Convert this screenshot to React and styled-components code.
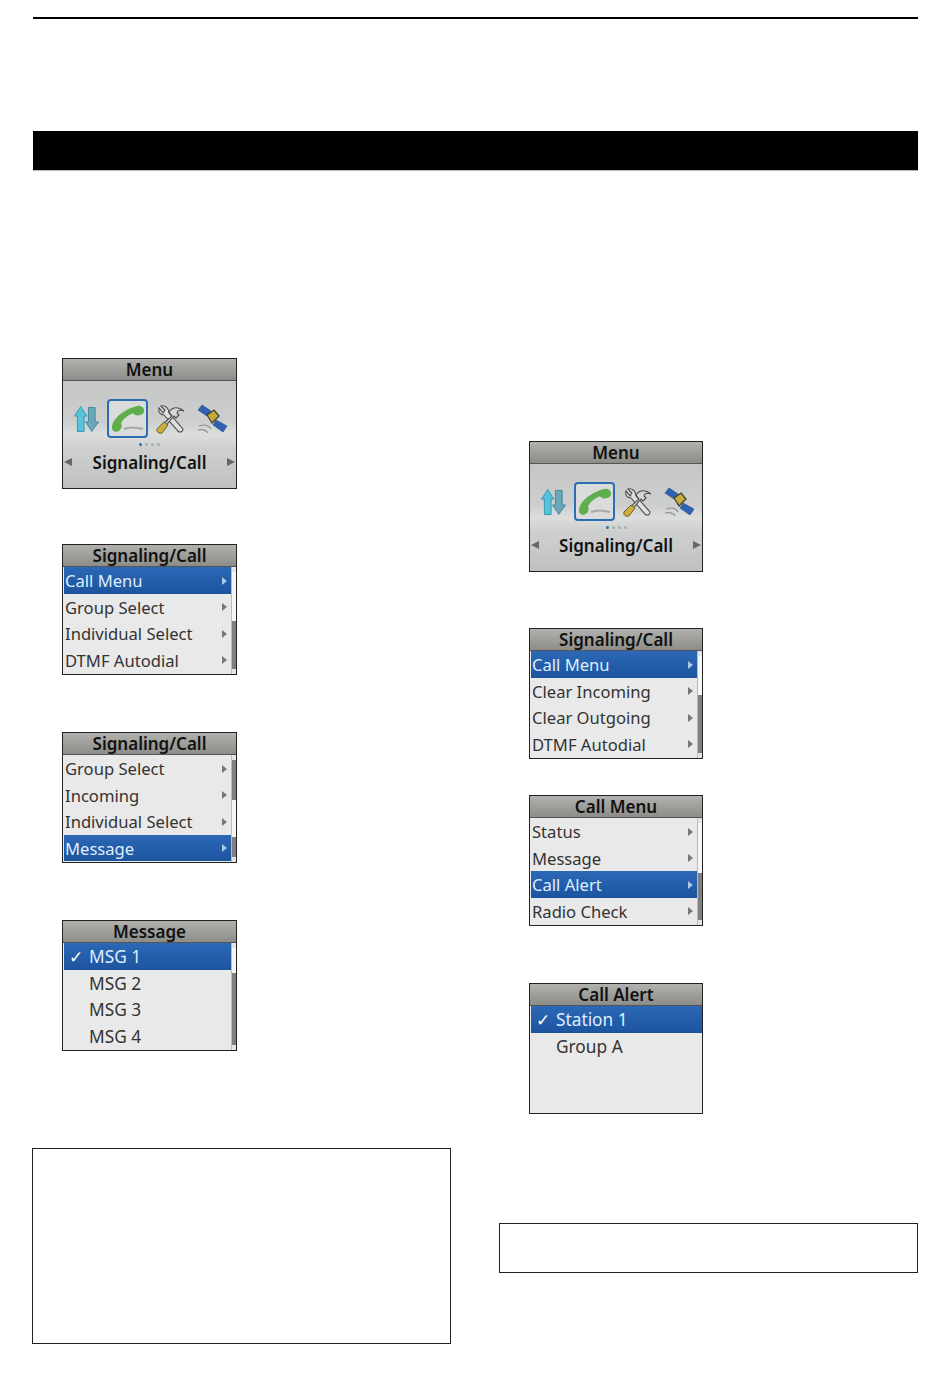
import React from 'react';
import styled, { createGlobalStyle } from 'styled-components';

const GlobalStyle = createGlobalStyle`
  html, body {
    margin: 0;
    padding: 0;
    background: #fff;
  }
  body {
    font-family: 'Noto Sans', 'Open Sans', sans-serif;
  }
`;

const Page = styled.div`
  width: 950px;
  height: 1378px;
  padding: 17px 32px 0 33px;
  box-sizing: border-box;
  overflow: hidden;
`;

const TopRule = styled.div`
  height: 2px;
  background: #000;
`;

const TitleBar = styled.div`
  height: 39px;
  margin-top: 112px;
  background: #000;
  border-bottom: 1px solid #bbb;
`;

const Columns = styled.div`
  display: grid;
  grid-template-columns: 419px 419px;
  justify-content: space-between;
`;

const Column = styled.div`
  display: flex;
  flex-direction: column;
  padding-top: ${(p) => p.$top}px;
`;

const ScreenSlot = styled.div`
  margin-left: ${(p) => p.$left}px;
  margin-bottom: ${(p) => p.$gap}px;
`;

const Screen = styled.div`
  width: ${(p) => p.$width}px;
  height: 131px;
  box-sizing: border-box;
  border: 1px solid #222;
  background: #e9e9e9;
  display: flex;
  flex-direction: column;
  overflow: hidden;
`;

const ScreenTitle = styled.div`
  height: 22px;
  flex: none;
  background: linear-gradient(#b2b1ae, #8c8c88);
  border-bottom: 1px solid #555;
  box-sizing: border-box;
  text-align: center;
  font-size: 17px;
  font-weight: 600;
  line-height: 22px;
  color: #111;
`;

const MenuBody = styled.div`
  flex: 1;
  display: flex;
  flex-direction: column;
  background: linear-gradient(#c5c6c6 0%, #cdcece 38%, #dcdddd 50%, #cfd0d0 62%, #bfc1c1 100%);
`;

const IconRow = styled.div`
  display: flex;
  align-items: center;
  height: 39px;
  margin-top: 18px;
  padding-left: 11px;
`;

const IconCell = styled.div`
  width: ${(p) => p.$width}px;
  height: 36px;
  margin-right: ${(p) => p.$gap}px;
  display: flex;
  align-items: center;
  justify-content: center;
  flex: none;
`;

const PhoneFrame = styled.div`
  width: 41px;
  height: 39px;
  box-sizing: border-box;
  border: 2px solid #2a6db5;
  border-radius: 4px;
  background: #dadcdc;
  display: flex;
  align-items: center;
  justify-content: center;
  margin-right: 8px;
  flex: none;
`;

const Dots = styled.div`
  display: flex;
  justify-content: center;
  gap: 3px;
  height: 3px;
  margin-top: 5px;
`;

const Dot = styled.span`
  width: 3px;
  height: 3px;
  border-radius: 50%;
  background: ${(p) => (p.$on ? '#2a6db5' : '#a9aeb0')};
`;

const Selector = styled.div`
  display: flex;
  align-items: center;
  justify-content: space-between;
  padding: 0 1px 0 1px;
  height: 24px;
  margin-top: 4px;
  font-size: 17px;
  font-weight: 600;
  color: #111;
`;

const Caret = styled.span`
  width: 0;
  height: 0;
  border-top: 4px solid transparent;
  border-bottom: 4px solid transparent;
  ${(p) => (p.$left ? 'border-right: 8px solid #666;' : 'border-left: 8px solid #666;')}
`;

const ListBody = styled.div`
  flex: 1;
  display: flex;
  min-height: 0;
`;

const Rows = styled.div`
  flex: 1;
  display: flex;
  flex-direction: column;
  padding-left: 1px;
  min-width: 0;
`;

const Row = styled.div`
  height: 26.5px;
  flex: none;
  display: flex;
  align-items: center;
  justify-content: space-between;
  box-sizing: border-box;
  padding: 1px 4px 0 1px;
  font-size: ${(p) => (p.$large ? 17.3 : 16.6)}px;
  color: ${(p) => (p.$active ? '#dfeefb' : '#333')};
  background: ${(p) => (p.$active ? 'linear-gradient(#2c68b6, #1c549f)' : 'transparent')};
`;

const RowLabel = styled.span`
  display: flex;
  align-items: center;
  white-space: nowrap;
`;

const Check = styled.span`
  width: 24px;
  padding-left: 4px;
  box-sizing: border-box;
  font-family: 'DejaVu Sans', sans-serif;
  font-size: 17px;
  font-weight: 700;
  color: #fff;
`;

const RowCaret = styled.span`
  width: 0;
  height: 0;
  border-top: 4px solid transparent;
  border-bottom: 4px solid transparent;
  border-left: 5px solid ${(p) => (p.$active ? '#a9c8e8' : '#777')};
`;

const ScrollBar = styled.div`
  width: 5px;
  flex: none;
  display: flex;
  flex-direction: column;
  background: #f2f2f2;
  border-left: 1px solid #bbb;
  box-sizing: border-box;
`;

const ScrollCap = styled.div`
  height: 5px;
  flex: none;
  background: #e4e4e4;
`;

const ScrollFill = styled.div`
  flex: ${(p) => (p.$h ? `0 0 ${p.$h}px` : 1)};
  background: ${(p) => (p.$dark ? '#808080' : '#f6f6f6')};
`;

function UpDownIcon() {
  return (
    <svg width="26" height="30" viewBox="0 0 26 30">
      <path d="M7 2 L13.5 12 H10.5 V28 H3.5 V12 H0.5 Z" fill="#56c3da" stroke="#1f8aa5" strokeWidth="0.8" />
      <path d="M18.5 28 L25.5 18 H22 V3 H15 V18 H12 Z" fill="#6aa7b8" stroke="#2a7f98" strokeWidth="0.8" />
    </svg>
  );
}

function PhoneIcon() {
  return (
    <svg width="37" height="35" viewBox="0 0 37 35">
      <path
        d="M3 27 C3 17 16 8 28 5 C32 4 36 7 35 11 C34 14 29 15 26 14 C25 13 24 12 22 13 C18 15 14 18 12 22 C13 24 13 27 11 29 C8 32 3 31 3 27 Z"
        fill="#5fae4c"
      />
      <path d="M15 28 C20 26 27 26 34 28" stroke="#a6a8a8" strokeWidth="2" fill="none" />
    </svg>
  );
}

function ToolsIcon() {
  return (
    <svg width="30" height="30" viewBox="0 0 30 30">
      <path d="M3 4 C2 8 4 11 8 11 L22 27 C24 29 27 28 27 25 L13 9 C13 4 9 1 5 2 L9 6 L7 9 Z" fill="#dfe1e1" stroke="#4b4b4b" strokeWidth="1.1" />
      <path d="M16 12 L13 8 C16 3 22 2 28 7 C24 5 21 7 21 9 L23 11 L20 14 L18 12 L7 25 L4 23 Z" fill="#d4d6d6" stroke="#4b4b4b" strokeWidth="1.1" />
      <path d="M1 25 L8 18 L12 21 L6 29 C3 30 0 28 1 25 Z" fill="#cdae3e" stroke="#5f5520" strokeWidth="0.9" />
    </svg>
  );
}

function SatelliteIcon() {
  return (
    <svg width="32" height="30" viewBox="0 0 32 30">
      <path d="M6 1 L15 7 L11 12 L2 6 Z" fill="#2f62b0" stroke="#1f4687" strokeWidth="0.6" />
      <path d="M20 16 L31 22 L27 28 L17 21 Z" fill="#2f62b0" stroke="#1f4687" strokeWidth="0.6" />
      <path d="M11 11 L18 6 L23 12 L16 19 Z" fill="#c4ab3e" stroke="#3f3e28" strokeWidth="1.2" />
      <path d="M3 22 C8 20 13 21 15 25 M2 26 C6 25 10 26 12 29" stroke="#8d8f90" strokeWidth="1.2" fill="none" />
    </svg>
  );
}

function MenuScreen({ width }) {
  return (
    <Screen $width={width}>
      <ScreenTitle>Menu</ScreenTitle>
      <MenuBody>
        <IconRow>
          <IconCell $width={25} $gap={8}>
            <UpDownIcon />
          </IconCell>
          <PhoneFrame>
            <PhoneIcon />
          </PhoneFrame>
          <IconCell $width={30} $gap={10}>
            <ToolsIcon />
          </IconCell>
          <IconCell $width={32} $gap={0}>
            <SatelliteIcon />
          </IconCell>
        </IconRow>
        <Dots>
          <Dot $on />
          <Dot />
          <Dot />
          <Dot />
        </Dots>
        <Selector>
          <Caret $left />
          Signaling/Call
          <Caret />
        </Selector>
      </MenuBody>
    </Screen>
  );
}

function ListScreen({ width, title, rows, active, bars, checked }) {
  return (
    <Screen $width={width}>
      <ScreenTitle>{title}</ScreenTitle>
      <ListBody>
        <Rows>
          {rows.map((label, i) => (
            <Row key={label} $active={i === active} $large={checked}>
              <RowLabel>
                {checked && <Check>{i === 0 ? '✓' : ''}</Check>}
                {label}
              </RowLabel>
              {!checked && <RowCaret $active={i === active} />}
            </Row>
          ))}
        </Rows>
        {bars && (
          <ScrollBar>
            <ScrollCap />
            {bars.map((bar, i) => (
              <ScrollFill key={i} $h={bar.h} $dark={bar.dark} />
            ))}
            <ScrollCap />
          </ScrollBar>
        )}
      </ListBody>
    </Screen>
  );
}

const Note = styled.div`
  box-sizing: border-box;
  height: ${(p) => p.$height}px;
  margin: ${(p) => p.$top}px ${(p) => p.$right}px 0 ${(p) => p.$left}px;
  border: 1px solid #222;
`;

export default function App() {
  return (
    <Page>
      <GlobalStyle />
      <TopRule />
      <TitleBar />
      <Columns>
        <Column $top={187}>
          <ScreenSlot $left={29} $gap={55}>
            <MenuScreen width={175} />
          </ScreenSlot>
          <ScreenSlot $left={29} $gap={57}>
            <ListScreen
              width={175}
              title="Signaling/Call"
              rows={['Call Menu', 'Group Select', 'Individual Select', 'DTMF Autodial']}
              active={0}
              bars={[{ h: 49 }, { dark: true }]}
            />
          </ScreenSlot>
          <ScreenSlot $left={29} $gap={57}>
            <ListScreen
              width={175}
              title="Signaling/Call"
              rows={['Group Select', 'Incoming', 'Individual Select', 'Message']}
              active={3}
              bars={[{ h: 40, dark: true }, { h: 37 }, { dark: true }]}
            />
          </ScreenSlot>
          <ScreenSlot $left={29} $gap={0}>
            <ListScreen
              width={175}
              title="Message"
              rows={['MSG 1', 'MSG 2', 'MSG 3', 'MSG 4']}
              active={0}
              bars={[{ h: 25 }, { dark: true }]}
              checked
            />
          </ScreenSlot>
          <Note $height={196} $top={97} $left={-1} $right={1} />
        </Column>
        <Column $top={270}>
          <ScreenSlot $left={30} $gap={56}>
            <MenuScreen width={174} />
          </ScreenSlot>
          <ScreenSlot $left={30} $gap={36}>
            <ListScreen
              width={174}
              title="Signaling/Call"
              rows={['Call Menu', 'Clear Incoming', 'Clear Outgoing', 'DTMF Autodial']}
              active={0}
              bars={[{ h: 39 }, { dark: true }]}
            />
          </ScreenSlot>
          <ScreenSlot $left={30} $gap={57}>
            <ListScreen
              width={174}
              title="Call Menu"
              rows={['Status', 'Message', 'Call Alert', 'Radio Check']}
              active={2}
              bars={[{ h: 50 }, { dark: true }]}
            />
          </ScreenSlot>
          <ScreenSlot $left={30} $gap={0}>
            <ListScreen
              width={174}
              title="Call Alert"
              rows={['Station 1', 'Group A']}
              active={0}
              checked
            />
          </ScreenSlot>
          <Note $height={50} $top={109} $left={0} $right={0} />
        </Column>
      </Columns>
    </Page>
  );
}
